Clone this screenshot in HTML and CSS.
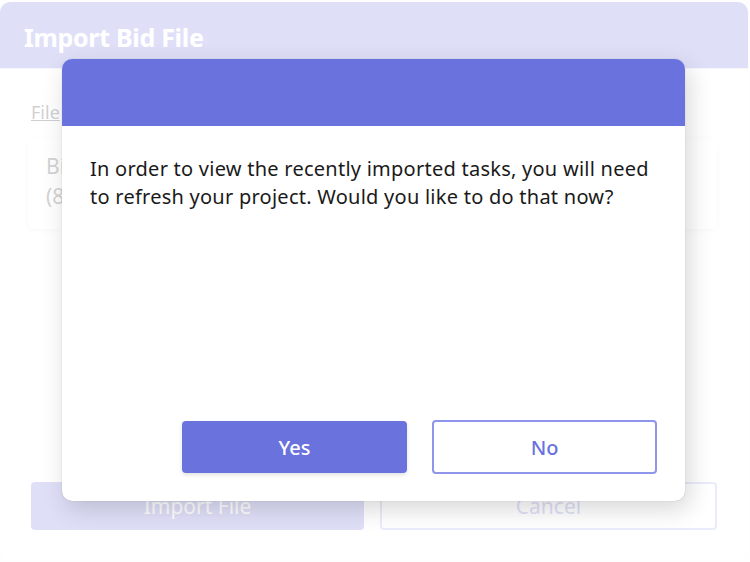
FILE: index.html
```html
<!DOCTYPE html>
<html>
<head>
<meta charset="utf-8">
<link rel="stylesheet" href="styles.css">
</head>
<body>
<div class="card">
  <div class="card-head"><h1 class="card-title">Import Bid File</h1></div>
  <div class="card-body">
    <div class="field-label">File</div>
    <div class="file-box">
      <div class="file-line">Bid_Export_Project_Tasks_2023_Final_Revision.xlsx</div>
      <div class="file-line">(84 KB)</div>
    </div>
    <div class="spacer"></div>
    <div class="card-actions">
      <div class="btn btn-fill">Import File</div>
      <div class="btn btn-outline">Cancel</div>
    </div>
  </div>
</div>
<div class="backdrop"></div>
<div class="modal">
  <div class="modal-head"></div>
  <div class="modal-body">
    <p class="modal-text">In order to view the recently imported tasks, you will need to refresh your project. Would you like to do that now?</p>
    <div class="modal-actions">
      <div class="mbtn mbtn-yes">Yes</div>
      <div class="mbtn mbtn-no">No</div>
    </div>
  </div>
</div>
</body>
</html>
```
FILE: styles.css
```css
html, body {
  margin: 0;
  padding: 0;
  background: #f7f7f7;
  font-family: "Noto Sans", "Open Sans", sans-serif;
}
body {
  width: 750px;
  height: 562px;
  overflow: hidden;
  position: relative;
}
.card {
  margin: 2px 2px 0 0;
  height: 558px;
  background: #fff;
  border-radius: 10px;
  overflow: hidden;
  display: flex;
  flex-direction: column;
}
.card-head {
  height: 66px;
  background: #6a72de;
  display: flex;
  align-items: center;
  padding-left: 24px;
  border-bottom: 1px solid #d5d8f2;
  flex: none;
}
.card-title {
  margin: 0;
  color: #fff;
  font-size: 25px;
  font-weight: 700;
  letter-spacing: -0.3px;
  position: relative;
  top: 2px;
}
.card-body {
  flex: 1;
  display: flex;
  flex-direction: column;
  padding: 31px 31px 30px 31px;
}
.field-label {
  color: #222;
  font-size: 18px;
  text-decoration: underline;
  align-self: flex-start;
}
.file-box {
  margin-top: 15px;
  margin-left: -3px;
  height: 90px;
  box-sizing: border-box;
  padding: 12px 18px;
  border-radius: 6px;
  box-shadow: 0 1px 6px rgba(0,0,0,0.12);
  color: #333;
  font-size: 21px;
  line-height: 30px;
  overflow: hidden;
  white-space: nowrap;
}
.spacer { flex: 1; }
.card-actions {
  display: flex;
  gap: 16px;
}
.btn {
  flex: 1;
  height: 48px;
  box-sizing: border-box;
  border-radius: 4px;
  display: flex;
  align-items: center;
  justify-content: center;
  font-size: 21px;
}
.btn-fill { background: #6a72de; color: #fff; }
.btn-outline { border: 2px solid #9da3f0; color: #6a72de; }
.backdrop {
  position: absolute;
  inset: 0;
  background: rgba(255,255,255,0.785);
}
.modal {
  position: absolute;
  left: 62px;
  top: 59px;
  width: 623px;
  height: 442px;
  background: #fff;
  border-radius: 10px;
  overflow: hidden;
  box-shadow: 0 0 1px rgba(0,0,0,0.3), 4px 8px 24px rgba(0,0,0,0.16);
  display: flex;
  flex-direction: column;
}
.modal-head {
  height: 67px;
  background: #6a72de;
  flex: none;
}
.modal-body {
  flex: 1;
  display: flex;
  flex-direction: column;
  padding: 29px 28px 27px 28px;
}
.modal-text {
  margin: 0;
  flex: 1;
  font-size: 20px;
  line-height: 28px;
  letter-spacing: 0.25px;
  color: #1a1a1a;
}
.modal-actions {
  display: flex;
  justify-content: flex-end;
  align-items: center;
  gap: 25px;
}
.mbtn {
  width: 225px;
  height: 52px;
  box-sizing: border-box;
  border-radius: 4px;
  display: flex;
  align-items: center;
  justify-content: center;
  font-size: 20px;
  font-weight: 500;
}
.mbtn-yes {
  background: #6a72de;
  color: #fff;
  box-shadow: 0 2px 4px rgba(0,0,0,0.12);
}
.mbtn-no {
  border: 2px solid #8f95eb;
  color: #6a72de;
  height: 54px;
}
```
